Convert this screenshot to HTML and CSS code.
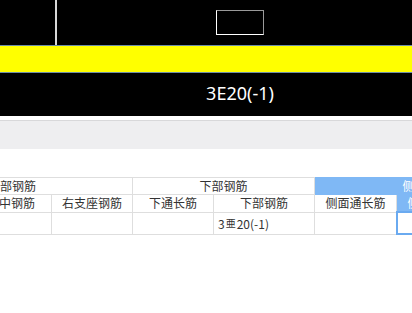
FILE: index.html
```html
<!DOCTYPE html>
<html>
<head>
<meta charset="utf-8">
<link rel="stylesheet" href="styles.css">
</head>
<body>
<div class="canvas">
  <div class="cut-text">C8@100/200(2)</div>
  <div class="vline"></div>
  <div class="rect"></div>
  <div class="beam"></div>
  <div class="label">3E20(-1)</div>
</div>
<div class="gap"></div>
<div class="toolbar"></div>
<div class="spacer"></div>
<div class="grid-wrap">
<table class="grid">
  <colgroup>
    <col class="c81"><col class="c81"><col class="c81"><col class="c101"><col class="c82"><col class="c82"><col class="c60">
  </colgroup>
  <tr class="r1">
    <td colspan="2" class="left">上部钢筋</td>
    <td colspan="2">下部钢筋</td>
    <td colspan="3" class="sel">侧面钢筋</td>
  </tr>
  <tr class="r2">
    <td>跨中钢筋</td>
    <td>右支座钢筋</td>
    <td>下通长筋</td>
    <td>下部钢筋</td>
    <td>侧面通长筋</td>
    <td class="sel">侧面构造筋</td>
    <td>侧面受扭</td>
  </tr>
  <tr class="r3">
    <td></td>
    <td></td>
    <td></td>
    <td class="left val">3<span class="bar">亜</span>20(-1)</td>
    <td></td>
    <td class="active"></td>
    <td></td>
  </tr>
</table>
</div>
</body>
</html>
```

FILE: styles.css
```css
html, body {
  margin: 0;
  padding: 0;
  overflow: hidden;
  background: #ffffff;
  width: 412px;
  height: 313px;
}

.canvas {
  position: relative;
  height: 116px;
  background: #000000;
  overflow: hidden;
}

.cut-text {
  position: absolute;
  left: 64px;
  top: -22px;
  color: #ffffff;
  font-family: "Noto Sans", sans-serif;
  font-size: 18px;
  line-height: 24px;
  white-space: nowrap;
}

.vline {
  position: absolute;
  left: 55px;
  top: 0;
  width: 2px;
  height: 46px;
  background: #d8d8d8;
}

.rect {
  position: absolute;
  left: 216px;
  top: 10px;
  width: 46px;
  height: 23px;
  border: 1px solid #ffffff;
  border-top-color: #9a9a9a;
  border-right-color: #9a9a9a;
}

.beam {
  position: absolute;
  left: 0;
  right: 0;
  top: 45px;
  height: 26px;
  background: #ffff00;
  border-top: 1px solid #6d8ea8;
  border-bottom: 1px solid #6d8ea8;
}

.label {
  position: absolute;
  left: 0;
  right: 0;
  top: 80px;
  text-align: center;
  padding-left: 68px;
  color: #ffffff;
  font-family: "Noto Sans", sans-serif;
  font-size: 18px;
  line-height: 26px;
}

.gap {
  height: 4px;
  background: #ffffff;
}

.toolbar {
  height: 28px;
  background: #eeeef0;
  border-top: 1px solid #d8d8da;
}

.spacer {
  height: 28px;
}

.grid-wrap {
  margin-left: -30px;
}

.grid {
  border-collapse: collapse;
  table-layout: fixed;
  width: 568px;
  font-family: "Noto Sans CJK SC", sans-serif;
  font-size: 12px;
  color: #333333;
}

.c81 { width: 81px; }
.c101 { width: 101px; }
.c82 { width: 82px; }
.c60 { width: 60px; }

.grid td {
  border: 1px solid #dedede;
  padding: 0;
  text-align: center;
  white-space: nowrap;
  overflow: hidden;
}

.r1 td, .r2 td {
  height: 16px;
  line-height: 16px;
}

.r3 td {
  height: 20px;
  line-height: 20px;
}

.grid td.left {
  text-align: left;
  padding-left: 17px;
}

.grid td.val {
  padding-left: 4px;
}

.grid td.sel {
  background: #7fb8f5;
  color: #ffffff;
  border-color: #7fb8f5;
  border-left-color: #a9cff8;
}

.r1 td.sel {
  border-left-color: #dedede;
}

.grid td.active {
  border: 2px solid #6aaaf0;
}

.bar {
  font-size: 10px;
  vertical-align: 2px;
  margin: 0 1px;
}
```
